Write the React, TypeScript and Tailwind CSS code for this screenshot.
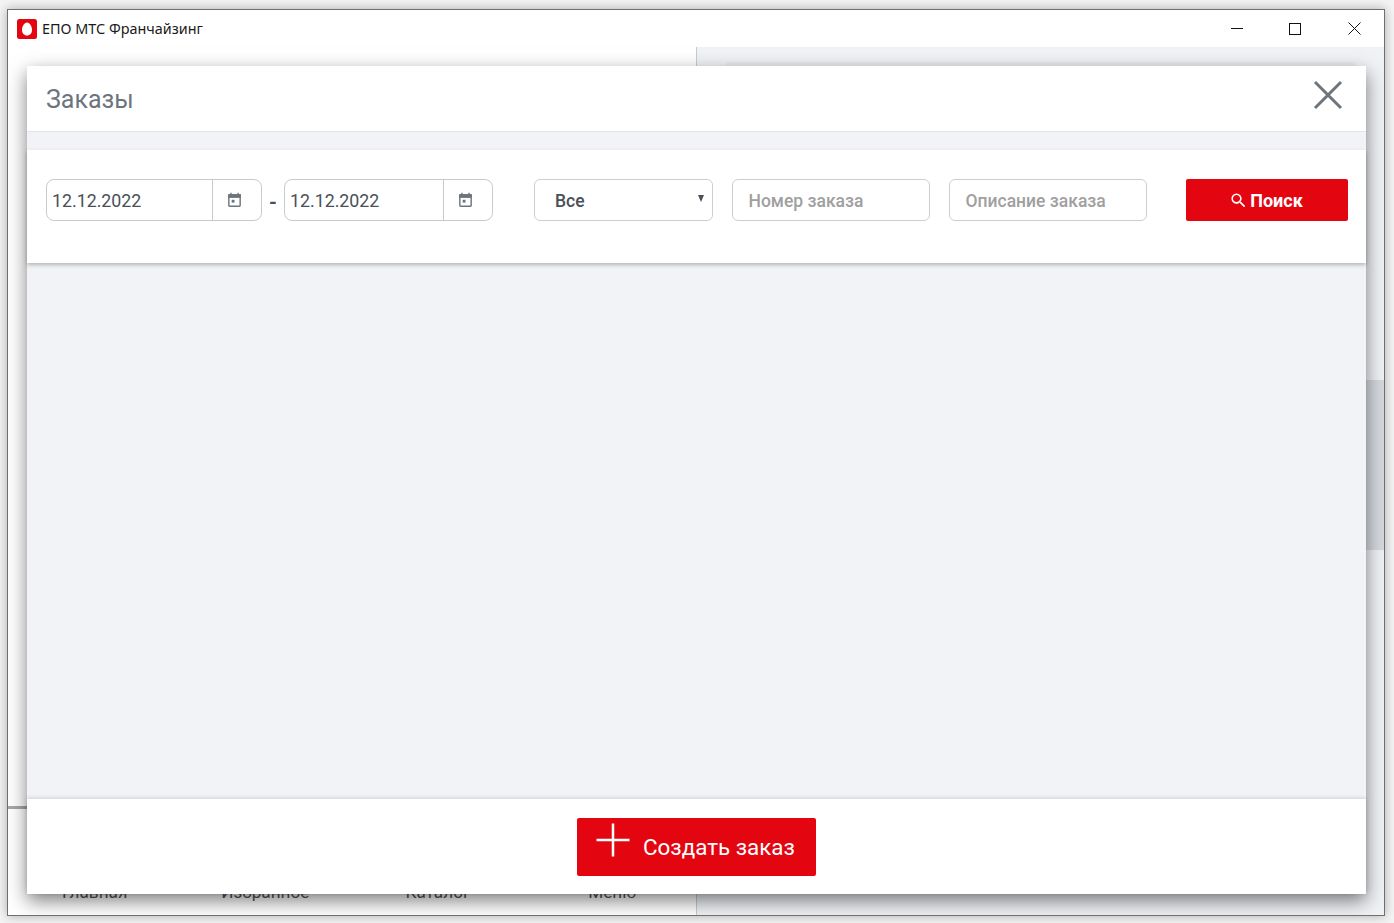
function CalendarIcon() {
  return (
    <svg viewBox="0 0 24 24" className="h-[17px] w-[17px]" fill="#6c757d">
      <path d="M16 1v2H8V1H6v2H5c-1.1 0-2 .9-2 2v14c0 1.100.9 2 2 2h14c1.100 0 2-.9 2-2V5c0-1.100-.9-2-2-2h-1V1h-2zm3 18H5V8h14v11z" />
      <path d="M3 3h18v5H3z" />
      <path d="M8 11h4v4H8z" />
    </svg>
  );
}

function DateField({ width, inputWidth, value }: { width: string; inputWidth: string; value: string }) {
  return (
    <div className={`flex h-[42px] ${width} rounded-[8px] border border-[#c8cacc] bg-white`}>
      <div className={`flex items-center ${inputWidth} border-r border-[#c8cacc] pl-[5px] pt-[2px] text-[17.8px] text-[#495057]`}>{value}</div>
      <div className="flex flex-1 items-center justify-center pr-[5px] pt-[1px]">
        <CalendarIcon />
      </div>
    </div>
  );
}

function TextField({ label }: { label: string }) {
  return (
    <div className="flex h-[42px] w-[198px] items-center rounded-[6px] border border-[#cccfd2] bg-white pl-[15.500px] pt-[2px] text-[17.5px] font-medium text-[#a0a0a0]">
      {label}
    </div>
  );
}

function Modal() {
  return (
    <div className="absolute left-[19px] top-[56px] flex h-[828px] w-[1339px] flex-col bg-[#f1f3f7] shadow-[0_7px_18px_rgba(0,0,0,0.5)]">
      <div className="flex h-[66px] shrink-0 items-center justify-between border-b border-[#e3e4e6] bg-white pl-[19px] pr-[23px]">
        <span className="mt-[2px] text-[25px] text-[#6c757d]">Заказы</span>
        <svg viewBox="0 0 30 30" className="mb-[7px] h-[30px] w-[30px]" stroke="#6c757d" strokeWidth="3" fill="none">
          <path d="M2 2l26 26M28 2L2 28" />
        </svg>
      </div>

      <div className="mt-[18px] flex h-[113px] shrink-0 items-start bg-white pl-[19px] pt-[29px] shadow-[0_2px_4px_rgba(0,0,0,0.25)]">
        <DateField width="w-[216px]" inputWidth="w-[166px]" value="12.12.2022" />
        <span className="flex h-[42px] w-[22px] items-center justify-center pt-[3px] text-[20px] font-bold text-[#495057]">-</span>
        <DateField width="w-[209px]" inputWidth="w-[159px]" value="12.12.2022" />

        <div className="ml-[41px] mr-[19px] flex h-[42px] w-[179px] items-center justify-between rounded-[6px] border border-[#cccfd2] bg-white pl-[20px] pr-[8px] text-[17.5px] font-medium text-[#495057]">
          <span className="pt-[2px]">Все</span>
          <span className="mb-[3px] h-0 w-0 border-x-[3.5px] border-t-[7px] border-x-transparent border-t-[#495057]" />
        </div>
        <TextField label="Номер заказа" />
        <div className="w-[19px]" />
        <TextField label="Описание заказа" />

        <button className="ml-[39px] flex h-[42px] w-[162px] items-center justify-center gap-[2px] rounded-[2px] bg-[#e30611] pr-[2px] text-[18px] font-bold text-white">
          <svg viewBox="0 0 24 24" className="h-[19px] w-[19px]" fill="#ffffff">
            <path d="M15.5 14h-.79l-.28-.27A6.47 6.47 0 0 0 16 9.5 6.5 6.5 0 1 0 9.5 16c1.61 0 3.09-.59 4.23-1.57l.27.28v.79l5 4.99L20.49 19l-4.99-5zm-6 0C7.01 14 5 11.99 5 9.5S7.01 5 9.5 5 14 7.01 14 9.5 11.99 14 9.5 14z" />
          </svg>
          <span className="pt-[1px]">Поиск</span>
        </button>
      </div>

      <div className="flex-1" />

      <div className="flex h-[95px] shrink-0 items-start justify-center bg-white pt-[19px] shadow-[0_-1px_4px_rgba(0,0,0,0.15)]">
        <button className="flex h-[58px] w-[239px] items-center rounded-[2px] bg-[#e30611] pl-[19px] text-[22.4px] text-white">
          <svg viewBox="0 0 34 34" className="mb-[14px] mr-[13px] h-[34px] w-[34px]" stroke="#ffffff" strokeWidth="2.5">
            <path d="M0.5 17h33M17 0.5v33" />
          </svg>
          <span className="pt-[2px]">Создать заказ</span>
        </button>
      </div>
    </div>
  );
}

export default function App() {
  return (
    <div className="h-[923px] w-[1394px] overflow-hidden bg-[#f4f4f4] pl-[7px] pt-[9px] font-['Roboto',sans-serif]">
      <div className="relative flex h-[907px] w-[1378px] flex-col overflow-hidden border border-[#6f6f6f] bg-white shadow-[0_0_10px_rgba(0,0,0,0.3)]">
        <div className="flex h-[37px] shrink-0 items-center bg-white pl-[9px]">
          <svg viewBox="0 0 20 20" className="h-[20px] w-[20px]">
            <rect width="20" height="20" rx="2.5" fill="#e30611" />
            <path d="M10 3.5c2.8 0 5 4 5 7.5 0 3.2-2 5.5-5 5.5s-5-2.3-5-5.5c0-3.5 2.2-7.5 5-7.5z" fill="#ffffff" />
          </svg>
          <span className="ml-[5px] font-['Noto_Sans',sans-serif] text-[14.4px] text-[#1a1a1a]">ЕПО МТС Франчайзинг</span>
          <div className="ml-auto flex items-center">
            <div className="mr-[46px] h-[1px] w-[12px] bg-[#111]" />
            <div className="mr-[47px] h-[12px] w-[12px] border border-[#111]" />
            <svg viewBox="0 0 13 13" className="mr-[23px] h-[13px] w-[13px]" stroke="#111" strokeWidth="1" fill="none">
              <path d="M0.5 0.5l12 12M12.5 0.5l-12 12" />
            </svg>
          </div>
        </div>

        <div className="flex flex-1">
          <div className="flex w-[689px] flex-col border-r border-[#c9cbd0] bg-white">
            <div className="flex-1" />
            <div className="h-[3px] bg-[#a5a7aa]" />
            <div className="flex h-[106px] items-start pt-[71px] text-[17.2px] text-[#555]">
              <span className="ml-[54px]">Главная</span>
              <span className="ml-[94px]">Избранное</span>
              <span className="ml-[96px]">Каталог</span>
              <span className="ml-[118px]">Меню</span>
            </div>
          </div>
          <div className="flex flex-1 flex-col bg-[#f0f2f6]">
            <div className="mx-[28px] mt-[15px] h-[20px] rounded-[4px] bg-[#e9ebef]" />
            <div className="ml-auto mt-[298px] h-[170px] w-[18px] bg-[#d6d9e0]" />
          </div>
        </div>

        <Modal />
      </div>
    </div>
  );
}
